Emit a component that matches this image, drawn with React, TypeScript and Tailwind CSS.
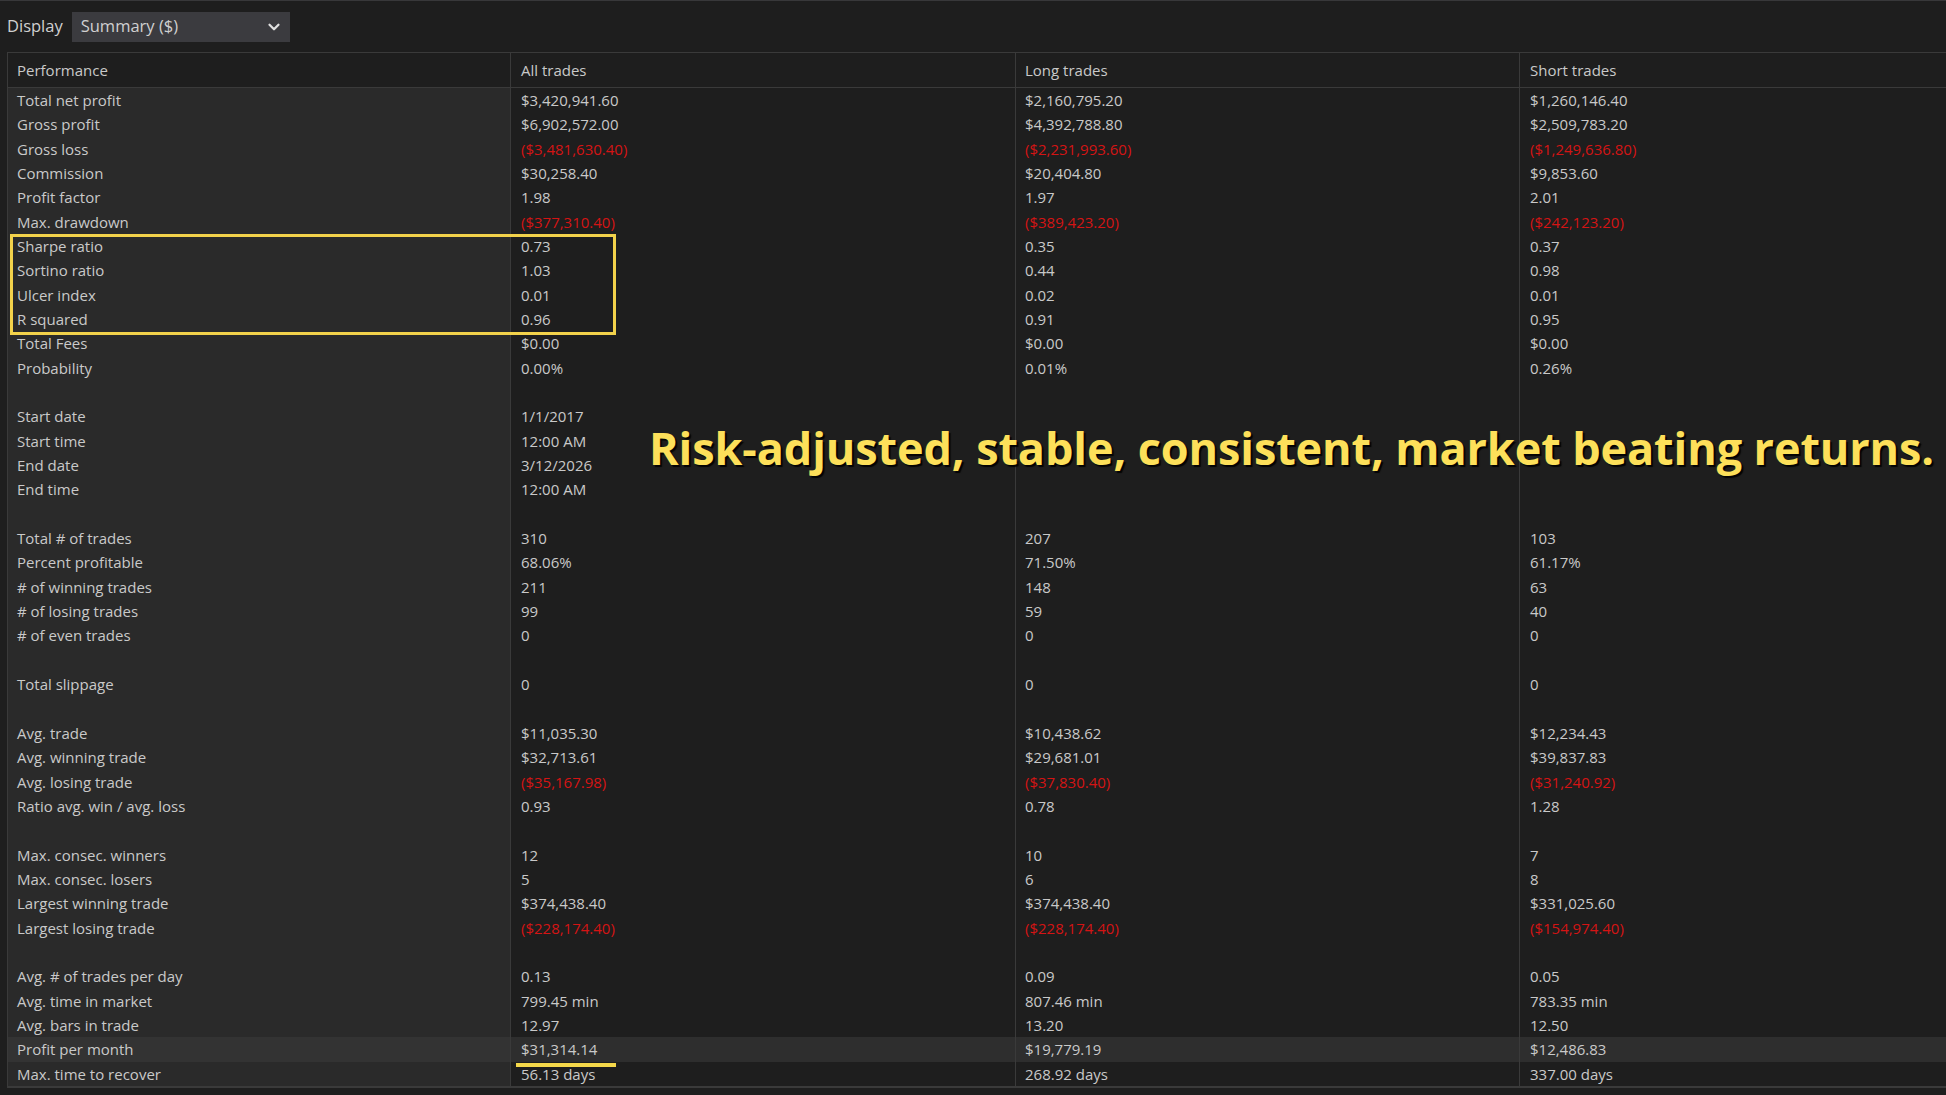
import { ChevronDown } from "lucide-react";

type Row = { label: string; all?: string; long?: string; short?: string; red?: boolean; hl?: boolean };

const ROWS: Row[] = [
  { label: "Total net profit", all: "$3,420,941.60", long: "$2,160,795.20", short: "$1,260,146.40" },
  { label: "Gross profit", all: "$6,902,572.00", long: "$4,392,788.80", short: "$2,509,783.20" },
  { label: "Gross loss", all: "($3,481,630.40)", long: "($2,231,993.60)", short: "($1,249,636.80)", red: true },
  { label: "Commission", all: "$30,258.40", long: "$20,404.80", short: "$9,853.60" },
  { label: "Profit factor", all: "1.98", long: "1.97", short: "2.01" },
  { label: "Max. drawdown", all: "($377,310.40)", long: "($389,423.20)", short: "($242,123.20)", red: true },
  { label: "Sharpe ratio", all: "0.73", long: "0.35", short: "0.37" },
  { label: "Sortino ratio", all: "1.03", long: "0.44", short: "0.98" },
  { label: "Ulcer index", all: "0.01", long: "0.02", short: "0.01" },
  { label: "R squared", all: "0.96", long: "0.91", short: "0.95" },
  { label: "Total Fees", all: "$0.00", long: "$0.00", short: "$0.00" },
  { label: "Probability", all: "0.00%", long: "0.01%", short: "0.26%" },
  { label: "" },
  { label: "Start date", all: "1/1/2017" },
  { label: "Start time", all: "12:00 AM" },
  { label: "End date", all: "3/12/2026" },
  { label: "End time", all: "12:00 AM" },
  { label: "" },
  { label: "Total # of trades", all: "310", long: "207", short: "103" },
  { label: "Percent profitable", all: "68.06%", long: "71.50%", short: "61.17%" },
  { label: "# of winning trades", all: "211", long: "148", short: "63" },
  { label: "# of losing trades", all: "99", long: "59", short: "40" },
  { label: "# of even trades", all: "0", long: "0", short: "0" },
  { label: "" },
  { label: "Total slippage", all: "0", long: "0", short: "0" },
  { label: "" },
  { label: "Avg. trade", all: "$11,035.30", long: "$10,438.62", short: "$12,234.43" },
  { label: "Avg. winning trade", all: "$32,713.61", long: "$29,681.01", short: "$39,837.83" },
  { label: "Avg. losing trade", all: "($35,167.98)", long: "($37,830.40)", short: "($31,240.92)", red: true },
  { label: "Ratio avg. win / avg. loss", all: "0.93", long: "0.78", short: "1.28" },
  { label: "" },
  { label: "Max. consec. winners", all: "12", long: "10", short: "7" },
  { label: "Max. consec. losers", all: "5", long: "6", short: "8" },
  { label: "Largest winning trade", all: "$374,438.40", long: "$374,438.40", short: "$331,025.60" },
  { label: "Largest losing trade", all: "($228,174.40)", long: "($228,174.40)", short: "($154,974.40)", red: true },
  { label: "" },
  { label: "Avg. # of trades per day", all: "0.13", long: "0.09", short: "0.05" },
  { label: "Avg. time in market", all: "799.45 min", long: "807.46 min", short: "783.35 min" },
  { label: "Avg. bars in trade", all: "12.97", long: "13.20", short: "12.50" },
  { label: "Profit per month", all: "$31,314.14", long: "$19,779.19", short: "$12,486.83", hl: true },
  { label: "Max. time to recover", all: "56.13 days", long: "268.92 days", short: "337.00 days" },
];

const GRID = "grid grid-cols-[503px_505px_504px_1fr]";

function DataRow({ r }: { r: Row }) {
  const val = r.red ? "text-[#d41414]" : "text-[#c9c9c9]";
  const cellBg = r.hl ? "bg-[#2e2e2e]" : "bg-[#1e1e1e]";
  return (
    <div className={`${GRID} h-[24.35px]`}>
      <div className={`flex items-center border-r border-[#3a3a3a] pl-[9px] text-[#c9c9c9] ${r.hl ? "bg-[#333333]" : "bg-[#2a2a2a]"}`}>
        {r.label}
      </div>
      <div className={`flex items-center border-r border-[#3a3a3a] pl-[10px] ${cellBg} ${val}`}>{r.all}</div>
      <div className={`flex items-center border-r border-[#3a3a3a] pl-[9px] ${cellBg} ${val}`}>{r.long}</div>
      <div className={`flex items-center pl-[10px] ${cellBg} ${val}`}>{r.short}</div>
    </div>
  );
}

export default function App() {
  return (
    <div className="relative h-[1095px] overflow-hidden border-t border-[#38383a] bg-[#1e1e1e] font-['Open_Sans',sans-serif] text-[15px]">
      {/* toolbar */}
      <div className="flex h-[51px] items-center gap-[9px] pl-[7px] text-[16.5px] text-[#d0d0d0]">
        <span>Display</span>
        <div className="flex h-[30px] w-[218px] items-center justify-between bg-[#3b3b3f] pl-[9px] pr-[7px]">
          <span>Summary ($)</span>
          <ChevronDown size={18} strokeWidth={3} className="text-[#e0e0e0]" />
        </div>
      </div>

      {/* table */}
      <div className="ml-[7px] border-l border-t border-[#3a3a3a]">
        <div className={`${GRID} h-[35px] border-b border-[#3a3a3a] text-[#c9c9c9]`}>
          <div className="flex items-center border-r border-[#3a3a3a] pl-[9px]">Performance</div>
          <div className="flex items-center border-r border-[#3a3a3a] pl-[10px]">All trades</div>
          <div className="flex items-center border-r border-[#3a3a3a] pl-[9px]">Long trades</div>
          <div className="flex items-center pl-[10px]">Short trades</div>
        </div>
        {ROWS.map((r, i) => (
          <DataRow key={i} r={r} />
        ))}
        <div className="border-t-2 border-[#3a3a3a]" />
      </div>

      {/* annotations */}
      <div className="absolute left-[10px] top-[233px] h-[101px] w-[606px] border-[3px] border-[#f2d24b]" />
      <div className="absolute left-[516px] top-[1062px] h-[4px] w-[100px] bg-[#f5d84a]" />
      <div className="absolute left-[649px] top-[424px] whitespace-nowrap font-['Open_Sans',sans-serif] text-[45px] font-bold leading-none tracking-[-0.1px] text-[#fde05a] [text-shadow:2px_2px_1px_rgba(0,0,0,0.9)]">
        Risk-adjusted, stable, consistent, market beating returns.
      </div>
    </div>
  );
}
